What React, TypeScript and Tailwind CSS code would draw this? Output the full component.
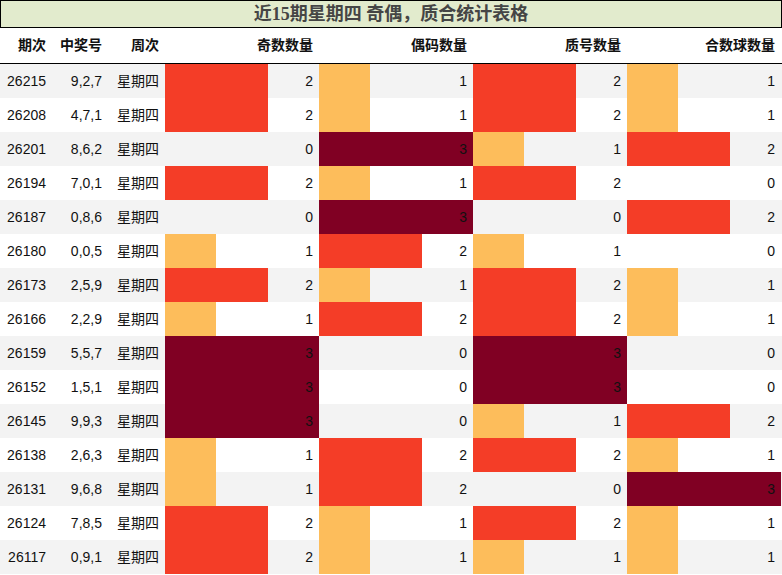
const rows: [string, string, number, number, number, number][] = [
  ['26215', '9,2,7', 2, 1, 2, 1],
  ['26208', '4,7,1', 2, 1, 2, 1],
  ['26201', '8,6,2', 0, 3, 1, 2],
  ['26194', '7,0,1', 2, 1, 2, 0],
  ['26187', '0,8,6', 0, 3, 0, 2],
  ['26180', '0,0,5', 1, 2, 1, 0],
  ['26173', '2,5,9', 2, 1, 2, 1],
  ['26166', '2,2,9', 1, 2, 2, 1],
  ['26159', '5,5,7', 3, 0, 3, 0],
  ['26152', '1,5,1', 3, 0, 3, 0],
  ['26145', '9,9,3', 3, 0, 1, 2],
  ['26138', '2,6,3', 1, 2, 2, 1],
  ['26131', '9,6,8', 1, 2, 0, 3],
  ['26124', '7,8,5', 2, 1, 2, 1],
  ['26117', '0,9,1', 2, 1, 1, 1],
]

// bar style per count
const BAR: Record<number, string> = {
  0: 'w-0',
  1: 'w-[51px] bg-[#fdbd5b]',
  2: 'w-[103px] bg-[#f43d27]',
  3: 'w-[154px] bg-[#800023]',
}

const font = { fontFamily: '"Liberation Sans", "Noto Sans CJK SC", sans-serif' }

function BarCell({ value }: { value: number }) {
  return (
    <div className="grid w-[154px] h-full">
      <div className={`col-start-1 row-start-1 h-full ${BAR[value]}`} />
      <div className="col-start-1 row-start-1 flex items-center justify-end pr-[6px] text-[14px] text-[#111]">
        {value}
      </div>
    </div>
  )
}

export default function App() {
  return (
    <div className="w-[782px] h-[575px] bg-white overflow-hidden" style={font}>
      {/* Title */}
      <div className="h-[28px] border border-black bg-[#e2ebcd] flex items-center justify-center">
        <span
          className="text-[18px] font-bold text-[#454545] leading-none"
          style={{ fontFamily: '"Liberation Serif", "Noto Sans CJK SC", serif' }}
        >
          近15期星期四 奇偶，质合统计表格
        </span>
      </div>

      {/* Header */}
      <div className="flex h-[36px] border-b border-black text-[14px] font-bold text-[#111]">
        <div className="w-[52px] flex items-center justify-end pr-[6px]">期次</div>
        <div className="w-[56px] flex items-center justify-end pr-[6px]">中奖号</div>
        <div className="w-[57px] flex items-center justify-end pr-[6px]">周次</div>
        <div className="w-[154px] flex items-center justify-end pr-[6px]">奇数数量</div>
        <div className="w-[154px] flex items-center justify-end pr-[6px]">偶码数量</div>
        <div className="w-[154px] flex items-center justify-end pr-[6px]">质号数量</div>
        <div className="w-[154px] flex items-center justify-end pr-[6px]">合数球数量</div>
      </div>

      {/* Rows */}
      {rows.map((r, i) => (
        <div
          key={r[0]}
          className={`flex h-[34px] text-[14px] text-[#111] ${i % 2 === 0 ? 'bg-[#f3f3f3]' : 'bg-white'}`}
        >
          <div className="w-[52px] flex items-center justify-end pr-[6px]">{r[0]}</div>
          <div className="w-[56px] flex items-center justify-end pr-[6px]">{r[1]}</div>
          <div className="w-[57px] flex items-center justify-end pr-[6px]">星期四</div>
          <BarCell value={r[2]} />
          <BarCell value={r[3]} />
          <BarCell value={r[4]} />
          <BarCell value={r[5]} />
        </div>
      ))}
    </div>
  )
}
